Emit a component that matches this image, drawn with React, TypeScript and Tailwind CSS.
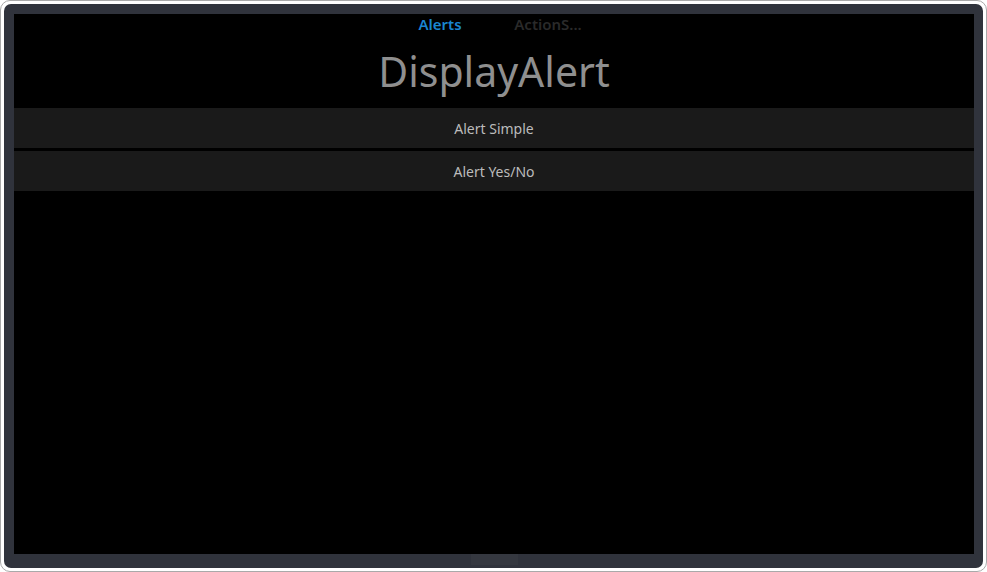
const FONT = { fontFamily: '"Noto Sans", "Open Sans", sans-serif' };

function TabBar() {
  return (
    <div className="flex h-[20px] items-center justify-center">
      <div className="w-[108px] text-center text-[15px] font-semibold leading-none text-[#1a86d0]">Alerts</div>
      <div className="w-[108px] text-center text-[15px] font-semibold leading-none text-[#2a2a2a]">ActionS...</div>
    </div>
  );
}

function AlertButton({ label }: { label: string }) {
  return (
    <button className="flex h-[40px] w-full items-center justify-center bg-[#1a1a1a] text-[14px] text-[#bcbcbc]">
      {label}
    </button>
  );
}

export default function App() {
  return (
    <div style={FONT} className="h-[572px] w-[987px] overflow-hidden bg-white">
      <div className="flex h-full w-full flex-col rounded-[10px] border border-[#a9a9a9] bg-white p-[3px]">
        <div className="flex flex-1 flex-col rounded-[7px] bg-[#30333c] pl-[10px] pr-[9px] pt-[10px]">
          <div className="flex flex-1 flex-col bg-black">
            <TabBar />
            <div className="flex h-[74px] items-center justify-center text-[41px] leading-none text-[#8f8f8f]">
              DisplayAlert
            </div>
            <div className="flex flex-col gap-[3px]">
              <AlertButton label="Alert Simple" />
              <AlertButton label="Alert Yes/No" />
            </div>
          </div>
          <div className="flex h-[14px] justify-center">
            <div className="h-[11px] w-[47px] bg-[#353840]" />
          </div>
        </div>
      </div>
    </div>
  );
}
